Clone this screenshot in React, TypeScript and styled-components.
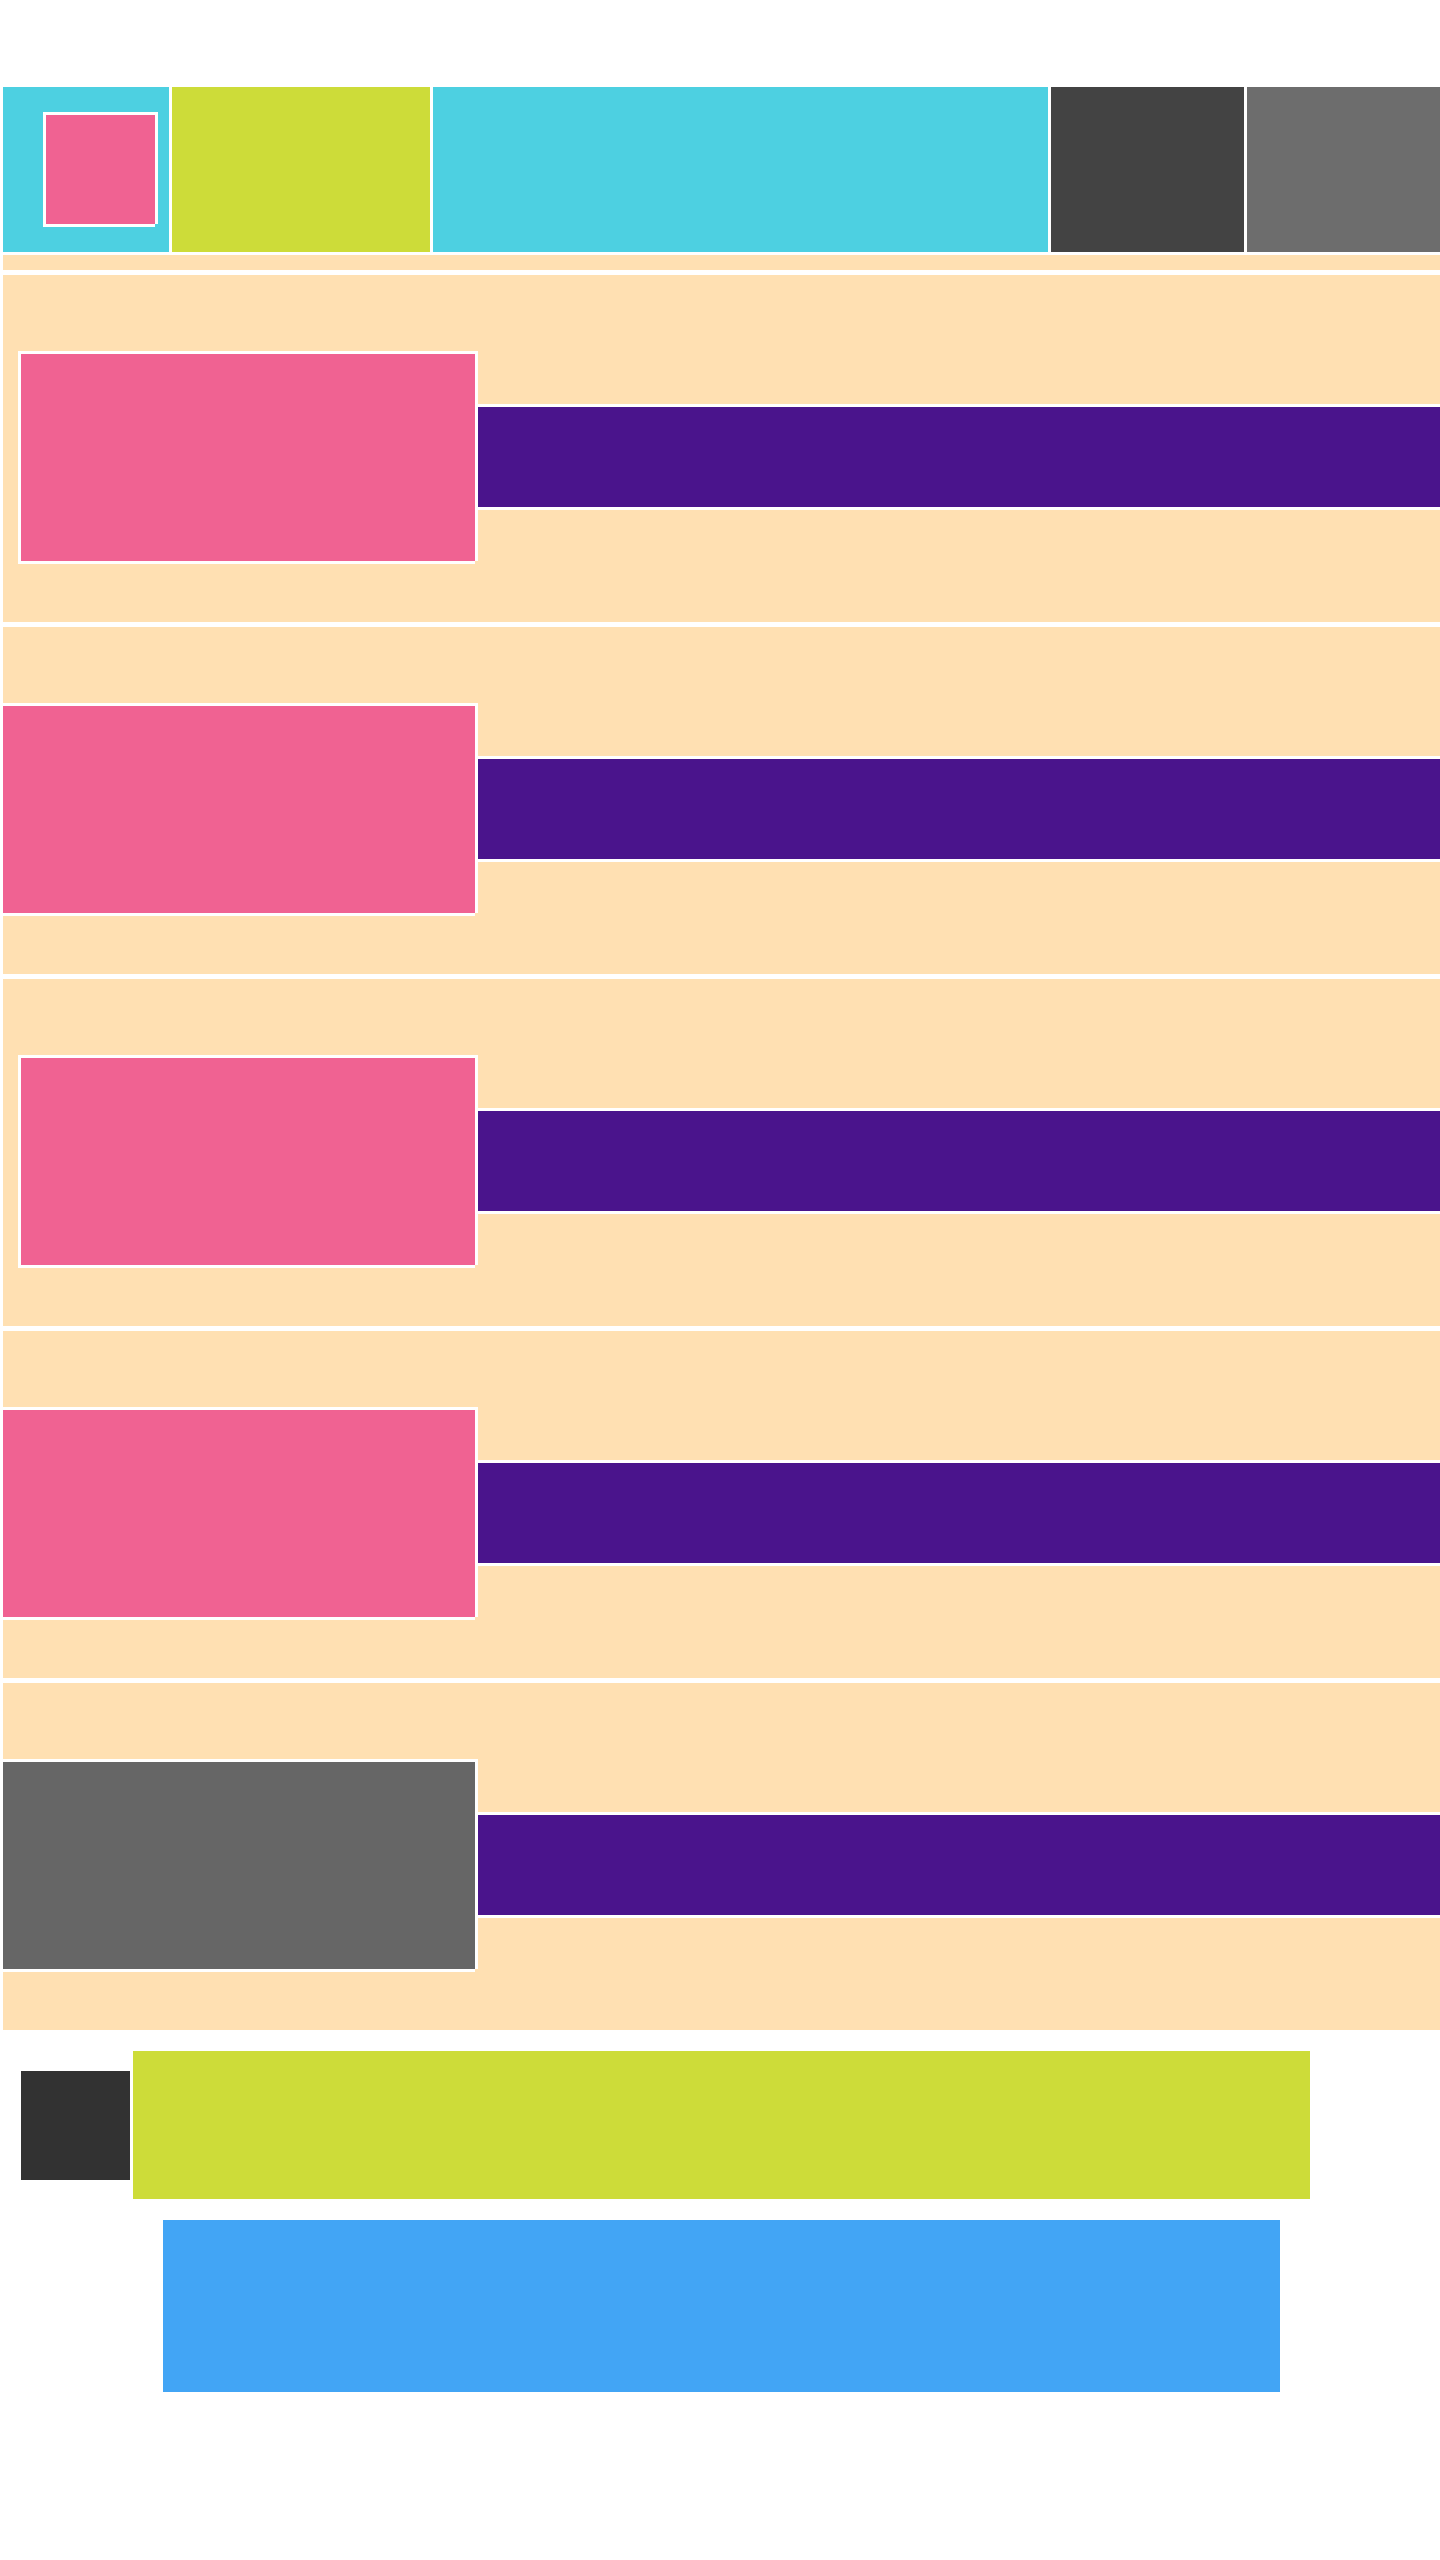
import React from "react";
import styled, { createGlobalStyle } from "styled-components";

const GlobalStyle = createGlobalStyle`
  html, body {
    margin: 0;
    padding: 0;
    background: #ffffff;
    font-family: "Liberation Sans", Arial, sans-serif;
  }
`;

const outline =
  "-3px -3px 0 #fff, 3px -3px 0 #fff, -3px 3px 0 #fff, 3px 0 0 #fff, 0 3px 0 #fff";

const Page = styled.div`
  padding: 87px 0 0 3px;
  display: flex;
  flex-direction: column;
`;

const Header = styled.header`
  display: flex;
  gap: 3px;
  height: 165px;
`;

const HeaderBlock = styled.div<{ $bg: string; $w?: number }>`
  background: ${(p) => p.$bg};
  ${(p) => (p.$w ? `width: ${p.$w}px; flex: none;` : "flex: 1;")}
`;

const LogoCell = styled(HeaderBlock)`
  display: flex;
  align-items: center;
  padding-left: 43px;
  box-sizing: border-box;
`;

const Logo = styled.div`
  width: 109px;
  height: 109px;
  background: #f06292;
  box-shadow: ${outline};
`;

const Strip = styled.div`
  height: 15px;
  margin-top: 3px;
  background: #ffe0b2;
`;

const List = styled.div`
  display: flex;
  flex-direction: column;
  gap: 5px;
  margin-top: 5px;
`;

const Card = styled.div`
  height: 347px;
  box-sizing: border-box;
  padding-top: 79px;
  background: #ffe0b2;
  display: flex;
  align-items: flex-start;
`;

const Thumb = styled.div<{ $inset: boolean; $bg: string }>`
  flex: none;
  width: ${(p) => (p.$inset ? 454 : 472)}px;
  margin-left: ${(p) => (p.$inset ? 18 : 0)}px;
  height: 207px;
  background: ${(p) => p.$bg};
  box-shadow: ${outline};
`;

const Bar = styled.div`
  flex: 1;
  height: 100px;
  margin: 53px 0 0 3px;
  background: #4a148c;
  box-shadow: 0 -3px 0 #fff, 0 3px 0 #fff;
`;

const Footer = styled.footer`
  padding-top: 21px;
  display: flex;
  flex-direction: column;
  gap: 21px;
`;

const FooterRow = styled.div`
  display: flex;
  align-items: center;
  padding-left: 18px;
`;

const Avatar = styled.div`
  width: 109px;
  height: 109px;
  background: #323232;
  margin-right: 3px;
`;

const Banner = styled.div`
  width: 1177px;
  height: 148px;
  background: #cddc39;
`;

const Panel = styled.div`
  width: 1117px;
  height: 172px;
  margin: 0 auto 168px;
  background: #42a5f5;
`;

const cards = [
  { inset: true, bg: "#f06292" },
  { inset: false, bg: "#f06292" },
  { inset: true, bg: "#f06292" },
  { inset: false, bg: "#f06292" },
  { inset: false, bg: "#666666" },
];

export default function App() {
  return (
    <>
      <GlobalStyle />
      <Page>
        <Header>
          <LogoCell $bg="#4dd0e1" $w={166}>
            <Logo />
          </LogoCell>
          <HeaderBlock $bg="#cddc39" $w={258} />
          <HeaderBlock $bg="#4dd0e1" $w={615} />
          <HeaderBlock $bg="#434343" $w={193} />
          <HeaderBlock $bg="#6d6d6d" />
        </Header>
        <Strip />
        <List>
          {cards.map((c, i) => (
            <Card key={i}>
              <Thumb $inset={c.inset} $bg={c.bg} />
              <Bar />
            </Card>
          ))}
        </List>
        <Footer>
          <FooterRow>
            <Avatar />
            <Banner />
          </FooterRow>
          <Panel />
        </Footer>
      </Page>
    </>
  );
}
